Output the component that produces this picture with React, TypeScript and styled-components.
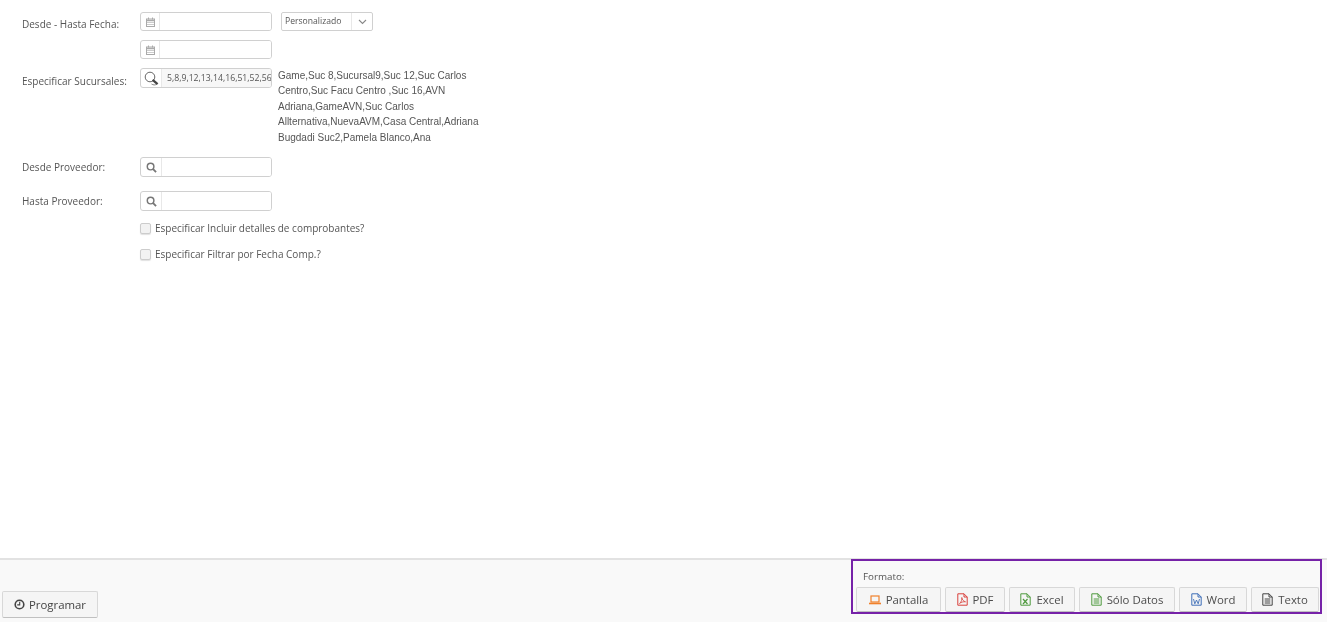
import React from "react";
import styled, { createGlobalStyle } from "styled-components";

const Global = createGlobalStyle`
  html, body { margin: 0; padding: 0; background: #fff; }
  body { font-family: "Open Sans", "Liberation Sans", sans-serif; color: #555; overflow: hidden; }
  * { box-sizing: border-box; }
`;

const Page = styled.div`
  width: 1327px;
  height: 622px;
  display: flex;
  flex-direction: column;
  filter: blur(0.4px);
`;

const Form = styled.main`
  flex: 1;
  padding: 12px 0 0 22px;
`;

const Row = styled.div<{ $h: number; $mb: number }>`
  display: flex;
  align-items: flex-start;
  height: ${(p) => p.$h}px;
  margin-bottom: ${(p) => p.$mb}px;
`;

const Label = styled.label<{ $top: number }>`
  width: 118px;
  font-size: 10px;
  line-height: 14px;
  padding-top: ${(p) => p.$top}px;
  color: #555;
  flex: none;
`;

const InputGroup = styled.div<{ $h: number }>`
  width: 132px;
  height: ${(p) => p.$h}px;
  display: flex;
  border: 1px solid #d0d0d0;
  border-radius: 3px;
  background: #fff;
  flex: none;
  overflow: hidden;
`;

const Addon = styled.span<{ $w: number }>`
  width: ${(p) => p.$w}px;
  flex: none;
  display: flex;
  align-items: center;
  justify-content: center;
  border-right: 1px solid #e8e8e8;
  color: #777;
`;

const Field = styled.input<{ $filled?: boolean }>`
  flex: 1;
  min-width: 0;
  border: 0;
  outline: 0;
  padding: 0 0 0 5px;
  font: 8.7px "Open Sans", sans-serif;
  color: #555;
  background: ${(p) => (p.$filled ? "#f7f7f7" : "#fff")};
`;

const Select = styled.div`
  margin-left: 9px;
  width: 92px;
  height: 19px;
  display: flex;
  border: 1px solid #d0d0d0;
  border-radius: 2px;
  font-size: 8.6px;
  color: #555;
`;

const SelectText = styled.span`
  flex: 1;
  padding-left: 3px;
  line-height: 17px;
  border-right: 1px solid #e8e8e8;
`;

const SelectArrow = styled.span`
  width: 20px;
  display: flex;
  align-items: center;
  justify-content: center;
  color: #777;
`;

const Names = styled.div`
  margin: 0 0 0 6px;
  width: 204px;
  font: 10px/15.4px "Liberation Sans", Arial, sans-serif;
  color: #555;
`;

const CheckRow = styled.label<{ $mb: number }>`
  display: flex;
  align-items: center;
  height: 12px;
  margin: 0 0 ${(p) => p.$mb}px 118px;
  font-size: 10px;
  color: #555;
`;

const Box = styled.span`
  width: 11px;
  height: 11px;
  border: 1px solid #ccc;
  border-radius: 2px;
  background: #f2f2f2;
  box-shadow: 0 1px 1px rgba(0, 0, 0, 0.12);
  margin-right: 4px;
  flex: none;
`;

const Footer = styled.footer`
  height: 64px;
  background: #f9f9f9;
  border-top: 2px solid #e2e2e2;
  display: flex;
  justify-content: space-between;
  align-items: flex-start;
  padding-left: 2px;
`;

const Button = styled.button`
  display: inline-flex;
  align-items: center;
  justify-content: center;
  gap: 5px;
  border: 1px solid #d8d8d8;
  border-bottom-color: #c0c0c0;
  background: #f5f5f5;
  border-radius: 2px;
  font: 11.4px "Open Sans", sans-serif;
  color: #4c4c4c;
  padding: 0;
`;

const ProgramarButton = styled(Button)`
  width: 96px;
  height: 27px;
  margin-top: 31px;
  gap: 4px;
  color: #444;
`;

const FormatBox = styled.section`
  width: 471px;
  height: 55px;
  margin: -1px 5px 0 0;
  border: 2px solid #7622a8;
  padding: 9px 3px 0 3px;
`;

const FormatTitle = styled.div`
  font-size: 9.8px;
  line-height: 13px;
  padding-left: 7px;
  margin-bottom: 4px;
  color: #555;
`;

const Buttons = styled.div`
  display: flex;
  gap: 4px;
`;

const FormatButton = styled(Button)<{ $w: number }>`
  width: ${(p) => p.$w}px;
  height: 25px;
  flex: none;
`;

const CalIcon = () => (
  <svg width="9" height="10" viewBox="0 0 9 10" fill="none" stroke="#aaa" strokeWidth="1">
    <rect x=".5" y="2" width="8" height="7.5" />
    <path d="M.5 3.5h8" strokeWidth="1.4" />
    <path d="M2.5 .5v2M6.5 .5v2" />
    <path d="M.5 5.5h8M.5 7.5h8" strokeWidth=".6" />
  </svg>
);

const SearchIcon = () => (
  <svg width="11" height="11" viewBox="0 0 12 12" fill="none" stroke="#777" strokeWidth="1.6">
    <circle cx="5" cy="5" r="3.6" />
    <path d="M7.8 7.8L11 11" strokeWidth="2" />
  </svg>
);

const MultiSearchIcon = () => (
  <svg width="15" height="15" viewBox="0 0 15 15" fill="none" stroke="#666">
    <circle cx="6" cy="6" r="4.8" strokeWidth="1" />
    <path d="M8.6 8.8l5 4.3" stroke="#444" strokeWidth="2.2" />
    <path d="M7.5 13c1.8 1.2 3.6 1.2 5.5.2" strokeWidth=".8" />
  </svg>
);

const Chevron = () => (
  <svg width="9" height="6" viewBox="0 0 9 6" fill="none" stroke="#888" strokeWidth="1.1">
    <path d="M1 1l3.5 3.5L8 1" />
  </svg>
);

const Clock = () => (
  <svg width="11" height="11" viewBox="0 0 11 11" fill="none" stroke="#444">
    <circle cx="5.5" cy="5.5" r="4.3" strokeWidth="1.6" />
    <path d="M5.7 2.8V5.9H3.2" strokeWidth="1.1" />
  </svg>
);

const Laptop = () => (
  <svg width="12" height="10" viewBox="0 0 12 10" fill="none" stroke="#f0802a" strokeWidth="1.2">
    <rect x="2" y="1" width="8" height="6" />
    <path d="M0 8.5h12" strokeWidth="1.6" />
  </svg>
);

const FileIcon = ({ color, glyph }: { color: string; glyph: "pdf" | "x" | "lines" | "w" }) => (
  <svg width="11" height="13" viewBox="0 0 11 13" fill="none" stroke={color} strokeWidth="1">
    <path d="M.8.8h6.2l3.2 3.2v8.2H.8zM7 .8V4h3.2" />
    {glyph === "pdf" && <path d="M2.5 10.5c2-1.5 2.5-4 2.3-6 .3 2.2 1.5 3.7 3.7 4.3-2.2-.2-4.2.3-6 1.7z" strokeWidth=".8" />}
    {glyph === "x" && <path d="M3 6l4.5 5M7.5 6L3 11" strokeWidth="1.2" />}
    {glyph === "lines" && <path d="M2.7 6h5.6M2.7 8h5.6M2.7 10h5.6" />}
    {glyph === "w" && <path d="M2.5 6l1.3 4.8L5.5 7l1.7 3.8L8.5 6" strokeWidth=".9" />}
  </svg>
);

export default function App() {
  return (
    <Page>
      <Global />
      <Form>
        <Row $h={19} $mb={9}>
          <Label $top={5}>Desde - Hasta Fecha:</Label>
          <InputGroup $h={19}>
            <Addon $w={19}><CalIcon /></Addon>
            <Field />
          </InputGroup>
          <Select>
            <SelectText>Personalizado</SelectText>
            <SelectArrow><Chevron /></SelectArrow>
          </Select>
        </Row>
        <Row $h={19} $mb={9}>
          <Label $top={5} />
          <InputGroup $h={19}>
            <Addon $w={19}><CalIcon /></Addon>
            <Field />
          </InputGroup>
        </Row>
        <Row $h={80} $mb={9}>
          <Label $top={6}>Especificar Sucursales:</Label>
          <InputGroup $h={20}>
            <Addon $w={21}><MultiSearchIcon /></Addon>
            <Field $filled readOnly value="5,8,9,12,13,14,16,51,52,56" />
          </InputGroup>
          <Names>
            Game,Suc 8,Sucursal9,Suc 12,Suc Carlos Centro,Suc Facu Centro ,Suc 16,AVN Adriana,GameAVN,Suc Carlos Allternativa,NuevaAVM,Casa Central,Adriana Bugdadi Suc2,Pamela Blanco,Ana
          </Names>
        </Row>
        <Row $h={20} $mb={14}>
          <Label $top={3}>Desde Proveedor:</Label>
          <InputGroup $h={20}>
            <Addon $w={21}><SearchIcon /></Addon>
            <Field />
          </InputGroup>
        </Row>
        <Row $h={20} $mb={11}>
          <Label $top={3}>Hasta Proveedor:</Label>
          <InputGroup $h={20}>
            <Addon $w={21}><SearchIcon /></Addon>
            <Field />
          </InputGroup>
        </Row>
        <CheckRow $mb={14}><Box />Especificar Incluir detalles de comprobantes?</CheckRow>
        <CheckRow $mb={0}><Box />Especificar Filtrar por Fecha Comp.?</CheckRow>
      </Form>
      <Footer>
        <ProgramarButton><Clock />Programar</ProgramarButton>
        <FormatBox>
          <FormatTitle>Formato:</FormatTitle>
          <Buttons>
            <FormatButton $w={85}><Laptop />Pantalla</FormatButton>
            <FormatButton $w={60}><FileIcon color="#d9413c" glyph="pdf" />PDF</FormatButton>
            <FormatButton $w={66}><FileIcon color="#4f9a3f" glyph="x" />Excel</FormatButton>
            <FormatButton $w={96}><FileIcon color="#4f9a3f" glyph="lines" />Sólo Datos</FormatButton>
            <FormatButton $w={68}><FileIcon color="#3f6fb8" glyph="w" />Word</FormatButton>
            <FormatButton $w={68}><FileIcon color="#444" glyph="lines" />Texto</FormatButton>
          </Buttons>
        </FormatBox>
      </Footer>
    </Page>
  );
}
